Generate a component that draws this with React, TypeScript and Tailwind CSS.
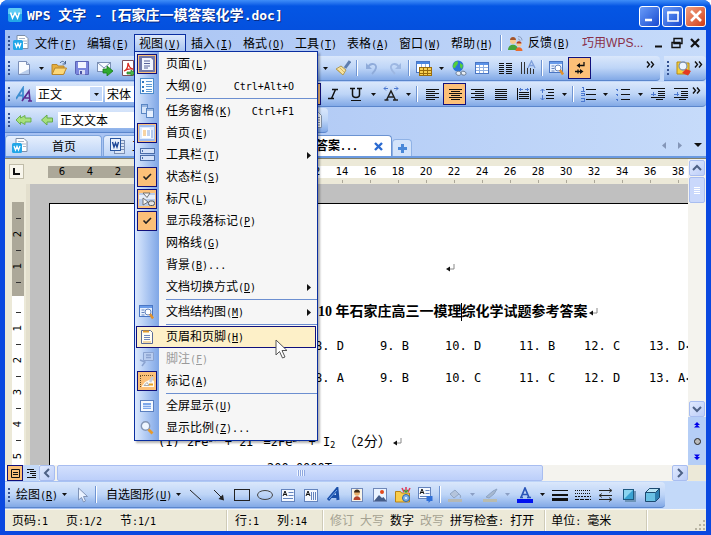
import { Fragment, ReactNode } from "react";
import clsx from "clsx";

const HAN = "font-['Noto_Sans_CJK_SC',sans-serif]";
const BAR = "bg-linear-to-b from-[#dae7fb] via-[#bed5f7] to-[#82a9e6] border-b border-[#5b86cc]";

/* Chinese text with the latin runs set at half width */
const Han = ({ text, latin = "text-[10px]" }: { text: string; latin?: string }) => (
  <span className="whitespace-pre">
    {text.split(/([\x20-\x7e]+)/).map((part, i) =>
      i % 2 ? (
        <span key={i} className={clsx("font-['DejaVu_Sans_Mono',monospace]", latin)}>
          {part}
        </span>
      ) : (
        part
      )
    )}
  </span>
);

const Mnemonic = ({ text, hotkey, tail = "" }: { text: string; hotkey: string; tail?: string }) => (
  <span className="whitespace-pre">
    {text}
    <span className="font-['DejaVu_Sans_Mono',monospace] text-[10px]">
      (<span className="underline underline-offset-1">{hotkey}</span>){tail}
    </span>
  </span>
);

const Svg = ({ children, crisp, className = "h-4 w-4" }: { children: ReactNode; crisp?: boolean; className?: string }) => (
  <svg
    viewBox="0 0 16 16"
    fill="none"
    className={clsx("shrink-0", className)}
    shapeRendering={crisp ? "crispEdges" : "auto"}
    aria-hidden="true"
  >
    {children}
  </svg>
);

const Lines = ({ d, color = "#111" }: { d: string; color?: string }) => <path d={d} stroke={color} />;

const WpsLogo = () => (
  <Svg className="h-4 w-4">
    <rect x="1" y="1" width="14" height="14" rx="2" fill="#22a7e8" />
    <path d="M1 3a2 2 0 0 1 2-2h10a2 2 0 0 1 2 2v4H1z" fill="#5fcbf5" />
    <path d="M3.500 5.500l2 5.500L8 6l2.500 5 2-5.500" stroke="#fff" strokeWidth="1.600" />
  </Svg>
);

const icons: Record<string, ReactNode> = {
  docWps: (
    <Svg>
      <path d="M4 .5h8l3 3v10H4z" fill="#fff" stroke="#7d8ea8" />
      <path d="M6 3.500h6M10 6h4M11 8.500h3" stroke="#a9b5c8" />
      <rect x="0" y="5" width="10" height="10" rx="1.500" fill="#22a7e8" />
      <path d="M2 8l1.500 4L5 8.500 6.500 12 8 8" stroke="#fff" strokeWidth="1.300" />
    </Svg>
  ),
  docW: (
    <Svg>
      <rect x="4.500" y="2.500" width="10" height="13" fill="#dce6f5" stroke="#7b8fb5" />
      <path d="M11 5.500h3M11 8.500h3M11 11.500h3" stroke="#7b8fb5" />
      <rect x=".5" y=".5" width="10" height="12" fill="#e9f0fb" stroke="#2a56a0" />
      <path d="M2.500 4l1.500 5L5.500 5 7 9l1.500-5" stroke="#1c4596" strokeWidth="1.400" />
    </Svg>
  ),
  newDoc: (
    <Svg>
      <path d="M2.500 1.500h8l3 3v10h-11z" fill="#f8fbff" stroke="#7b8fb8" />
      <path d="M10.500 1.500v3h3" stroke="#7b8fb8" fill="#cddbf0" />
      <path d="M3 14h10V9z" fill="#b9cdec" />
    </Svg>
  ),
  open: (
    <Svg>
      <path d="M1 4.500h5l1 1.500h6v8H1z" fill="#e6ae3c" stroke="#b8862c" />
      <path d="M1 14.500l3-6.500h11.500l-3 6.500z" fill="#fdd878" stroke="#b8862c" />
      <path d="M9 3c2-2.500 4-2 5 .5M14.500 1v3h-3" stroke="#48648f" />
    </Svg>
  ),
  save: (
    <Svg>
      <path d="M1.500 1.500h13v13h-12l-1-1z" fill="#7b86dd" stroke="#5a63b5" />
      <rect x="4" y="2" width="8" height="6" fill="#f2f5ff" />
      <rect x="5" y="10" width="6" height="4.500" fill="#d5daf5" />
      <rect x="6" y="11" width="2" height="3" fill="#4a53a5" />
    </Svg>
  ),
  send: (
    <Svg>
      <rect x=".5" y="2.500" width="13" height="9" fill="#f6faff" stroke="#7b90b5" />
      <path d="M1 3l6 5 6-5" stroke="#7b90b5" />
      <path d="M6 9h4V6l6 5-6 5v-3H6z" fill="#2faa2f" stroke="#187818" strokeWidth=".8" />
    </Svg>
  ),
  pdf: (
    <Svg>
      <path d="M2.500.5h11v15h-11z" fill="#fff" stroke="#7c4f5a" />
      <path d="M4 11c3-1 4-5 4-8 1 4 2 5 5 6-3-.5-6 0-9 2z" stroke="#d92a20" strokeWidth="1.300" />
      <path d="M7 12h4v-2l4 3-4 3v-2H7z" fill="#4cb648" stroke="#217a20" strokeWidth=".7" />
    </Svg>
  ),
  brush: (
    <Svg>
      <path d="M15 1l-5 7" stroke="#5d7dae" strokeWidth="3" />
      <path d="M1 9l5-3 5 4-3 5z" fill="#f6e2a0" stroke="#b09a56" />
      <path d="M2.500 9.500l4 4M5 8l4 4" stroke="#c9a548" strokeWidth=".7" />
    </Svg>
  ),
  undo: (
    <Svg>
      <path d="M4 7c3-5 9-3 8 1-.5 2.500-2 4-4 6" stroke="#8fabda" strokeWidth="1.800" />
      <path d="M2 3v6h6z" fill="#8fabda" />
    </Svg>
  ),
  redo: (
    <Svg>
      <path d="M12 7C9 2 3 4 4 8c.5 2.500 2 4 4 6" stroke="#9db7e2" strokeWidth="1.800" />
      <path d="M14 3v6H8z" fill="#9db7e2" />
    </Svg>
  ),
  tableGrid: (
    <Svg crisp>
      <rect x=".5" y="1.500" width="13" height="11" fill="#fff" stroke="#4a76c4" />
      <path d="M1 3h12" stroke="#4a86e0" strokeWidth="2" />
      <path d="M5.500 4v8M9.500 4v8" stroke="#9ab4de" />
      <rect x="3.500" y="7.500" width="12" height="8" fill="#f7cf52" stroke="#9a6c0c" />
      <path d="M4 10.500h11M4 13h11M7.500 8v7M11.500 8v7" stroke="#9a6c0c" />
    </Svg>
  ),
  globe: (
    <Svg>
      <circle cx="7" cy="6" r="5.500" fill="#2c75d8" />
      <path d="M4 2c3-2 4 1 2 3s-1 3-3 3-1-4 1-6zM9 3l3 2-1 4-2-2z" fill="#54cf3c" />
      <path d="M5 13.500c0-3 5-3 5 0s-5 2-5 0zM10 13c0-3 5-2 5 .5s-5 2-5-.5z" stroke="#67788f" fill="#e8eef6" />
    </Svg>
  ),
  table: (
    <Svg crisp>
      <rect x="1.500" y="2.500" width="13" height="11" fill="#fff" stroke="#4a76c4" />
      <path d="M2 4h12" stroke="#5a92e8" strokeWidth="2" />
      <path d="M2 7.500h12M2 10.500h12M5.500 5v8M9.500 5v8" stroke="#8fb0e3" />
    </Svg>
  ),
  columns: (
    <Svg crisp>
      <Lines d="M2 3.500h5M2 5.500h5M2 7.500h5M2 9.500h5M2 11.500h5M2 13.500h5M9 3.500h6M9 5.500h6M9 7.500h6M9 9.500h6M9 11.500h6M9 13.500h6" />
    </Svg>
  ),
  textDir: (
    <Svg>
      <Lines d="M1.500 2v12M4.500 2v12M7.500 8v6M10.500 8v6M13.500 9v5" color="#333" />
      <path d="M8 8l3.500-7L15 8M9.500 5.500h4" stroke="#7f9fda" strokeWidth="1.300" />
    </Svg>
  ),
  preview: (
    <Svg>
      <rect x=".5" y="1.500" width="13" height="11" fill="#e8f1ff" stroke="#4a76c4" />
      <path d="M1 3h12" stroke="#6a9cea" strokeWidth="2" />
      <path d="M2.500 6h3M2.500 8.500h3M2.500 11h3" stroke="#6484bd" />
      <circle cx="9" cy="8" r="3" fill="#fff" stroke="#6484bd" />
      <path d="M11 10l3 4.500" stroke="#e2922e" strokeWidth="2.500" />
    </Svg>
  ),
  marks: (
    <Svg>
      <path d="M12 2v3.500H6M3 11.500h7M6 9.500v4" stroke="#111" strokeWidth="1.300" />
      <path d="M4.500 5.500L8 3v5zM11.500 11.500L8 9v5z" fill="#111" />
    </Svg>
  ),
  findDoc: (
    <Svg>
      <path d="M2 2h4l1 1h7v11H2z" fill="#f6d23c" stroke="#b68a12" />
      <circle cx="8" cy="6" r="4" fill="#eef6ff" stroke="#7d90aa" strokeWidth="1.300" />
      <path d="M7 13l4-4 5 2-3 4.500z" fill="#e23a22" />
    </Svg>
  ),
  fontStyle: (
    <Svg>
      <path d="M0 13L7 2v11M2.500 9.500H7" stroke="#3d8ed0" strokeWidth="1.800" />
      <path d="M6 15l7-10 1 10M9 12h5M12 15h4" stroke="#5a2a90" strokeWidth="1.600" />
    </Svg>
  ),
  italic: (
    <Svg>
      <path d="M7 3.500h6M3 12.500h6M10.500 3.500l-4 9" stroke="#111" strokeWidth="1.500" />
    </Svg>
  ),
  underline: (
    <Svg>
      <path d="M2 2.500h5M9 2.500h5M4.500 2.500v6q0 3 3.500 3t3.500-3v-6" stroke="#111" strokeWidth="1.500" />
      <path d="M3 14.500h10" stroke="#111" strokeWidth="1.200" />
    </Svg>
  ),
  charScale: (
    <Svg>
      <path d="M3.500 14L8 5l4.500 9M5.500 11h5M1.500 14h4M10 14h5" stroke="#222" strokeWidth="1.500" />
      <path d="M1 2.500h4M11 2.500h4M3 .5l-2 2 2 2M13 .5l2 2-2 2" stroke="#4c78cf" />
    </Svg>
  ),
  alignLeft: (
    <Svg crisp>
      <Lines d="M2 3.500h13M2 5.500h9M2 7.500h13M2 9.500h9M2 11.500h13M2 13.500h9" />
    </Svg>
  ),
  alignCenter: (
    <Svg crisp>
      <Lines d="M2 3.500h13M4 5.500h9M2 7.500h13M4 9.500h9M2 11.500h13M4 13.500h9" />
    </Svg>
  ),
  alignRight: (
    <Svg crisp>
      <Lines d="M1 3.500h13M5 5.500h9M1 7.500h13M5 9.500h9M1 11.500h13M5 13.500h9" />
    </Svg>
  ),
  justify: (
    <Svg crisp>
      <Lines d="M2 3.500h12M2 5.500h12M2 7.500h12M2 9.500h12M2 11.500h12M2 13.500h12" />
    </Svg>
  ),
  distribute: (
    <Svg crisp>
      <Lines d="M1.500 2v12M14.500 2v12M3 6.500h10M3 8.500h10M3 10.500h10M3 12.500h10" />
      <Lines d="M3 3.500h4M9 3.500h4M4.500 2v3M11.500 2v3" color="#4c78cf" />
    </Svg>
  ),
  lineSpace: (
    <Svg>
      <Lines d="M7 3.500h8M9 6.500h6M7 9.500h8M7 12.500h8" />
      <path d="M3.500 3v4M1.500 5l2-2 2 2M3.500 9v5M1.500 12l2 2 2-2" stroke="#4c78cf" />
    </Svg>
  ),
  numbered: (
    <Svg crisp>
      <Lines d="M6 3.500h10M6 8.500h10M6 13.500h10" />
      <Lines d="M2 1.500h1.500v4M1 5.500h4M1 7.500h3v2H1M1 12h3v3H1" color="#4c78cf" />
    </Svg>
  ),
  bullets: (
    <Svg crisp>
      <Lines d="M6 3.500h9M6 8.500h9M6 13.500h9" />
      <Lines d="M1 3.500h2M1 8.500h2M1 13.500h2M2 2.500v2M2 7.500v2M2 12.500v2" color="#4c78cf" />
    </Svg>
  ),
  outdent: (
    <Svg crisp>
      <Lines d="M1 2.500h14M8 5.500h7M8 7.500h7M8 9.500h7M1 11.500h14M6 13.500h7" />
      <Lines d="M1 8h5M3.500 6v4" color="#4c78cf" />
    </Svg>
  ),
  indent: (
    <Svg crisp>
      <Lines d="M1 2.500h14M8 5.500h7M8 7.500h7M8 9.500h7M1 11.500h14M6 13.500h7" />
      <Lines d="M1 8h5M4.500 6v4" color="#4c78cf" />
    </Svg>
  ),
  arrowsLeft: (
    <Svg>
      <path d="M0 8l4.500-4.500V6L9 3.500V6h6v4H9v2.500L4.500 10v2.500z" fill="#a6e07c" stroke="#64ab4a" strokeWidth=".9" />
    </Svg>
  ),
  arrowLeft: (
    <Svg>
      <path d="M2.500 8L8 3v3h5.500v4H8v3z" fill="#a6e07c" stroke="#64ab4a" />
    </Svg>
  ),
  page: (
    <Svg>
      <path d="M3.500.5h7l3 3v12h-10z" fill="#fff" stroke="#8090a8" />
      <path d="M5 5.500h7M5 8h7M5 10.500h7M5 13h7" stroke="#8090a8" />
    </Svg>
  ),
  cursor: (
    <Svg>
      <path d="M4.500 1v12l3-2.500 2 4.500 2-1-2-4.500h4z" fill="#eaf2ff" stroke="#8094b8" />
    </Svg>
  ),
  line: (
    <Svg>
      <Lines d="M2 3l11 10" color="#222" />
    </Svg>
  ),
  arrow: (
    <Svg>
      <Lines d="M3 3l8 8" color="#222" />
      <path d="M13 13.500L7.500 12 12 7.500z" fill="#222" />
    </Svg>
  ),
  rect: (
    <Svg crisp>
      <rect x=".5" y="2.500" width="15" height="11" stroke="#222" />
    </Svg>
  ),
  ellipse: (
    <Svg>
      <ellipse cx="8" cy="8" rx="7.500" ry="4.500" stroke="#444" />
    </Svg>
  ),
  textBox: (
    <Svg>
      <rect x="1.500" y="2.500" width="13" height="12" fill="#f4f8ff" stroke="#6484bd" />
      <path d="M3 9l2-5 2 5M4 7.500h2" stroke="#111" />
      <path d="M8.500 5.500h5M8.500 8.500h5M3 11.500h10" stroke="#6484bd" />
    </Svg>
  ),
  textBoxV: (
    <Svg>
      <rect x="1.500" y="2.500" width="13" height="12" fill="#f4f8ff" stroke="#6484bd" />
      <path d="M3 9l2-5 2 5M4 7.500h2" stroke="#111" />
      <path d="M8.500 5v8M10.500 5v8M12.500 5v8" stroke="#6484bd" />
    </Svg>
  ),
  wordArt: (
    <Svg>
      <path d="M2 13L11 2l1 11M5.500 9.500H12" stroke="#1b4fa8" strokeWidth="3" />
      <path d="M3 12L11 3" stroke="#6ea4ec" />
    </Svg>
  ),
  person: (
    <Svg>
      <rect x="2.500" y="1.500" width="11" height="13" fill="#f8f4e8" stroke="#7088b8" />
      <circle cx="8" cy="6" r="2.800" fill="#e9b06c" />
      <path d="M5 5.500c0-4 6-4 6 0z" fill="#3d2a18" />
      <path d="M4.500 13c0-5 7-5 7 0z" fill="#b5432c" />
    </Svg>
  ),
  picture: (
    <Svg>
      <rect x="1.500" y="1.500" width="13" height="13" fill="#eaf3ff" stroke="#7088b8" />
      <circle cx="10" cy="5" r="2" fill="#e24a1c" />
      <path d="M2 14l5-6 3 3 1.500-1 3 4z" fill="#445c88" />
    </Svg>
  ),
  clip: (
    <Svg>
      <path d="M.5 4.500h5l1 1.500h8v9H.5z" fill="#f9cd4c" stroke="#b98314" />
      <path d="M7 1l2 4M11 0v5M15 1l-2 4" stroke="#e23f5c" strokeWidth="1.600" />
      <path d="M9 3l2 2 2-2" stroke="#35a435" strokeWidth="1.500" />
      <circle cx="11" cy="11" r="3.500" fill="#7fb2e8" stroke="#2d67ab" />
      <circle cx="11" cy="11" r="1" fill="#fff" />
    </Svg>
  ),
  textEffect: (
    <Svg>
      <rect x=".5" y=".5" width="12" height="11" fill="#f4f8ff" stroke="#6484bd" />
      <path d="M2 7l2-5 2 5M3 5.500h2" stroke="#111" />
      <path d="M7.500 3.500h4M7.500 6.500h4M2 9.500h9" stroke="#6484bd" />
      <path d="M8.500 9h6v5h-2l-2 2v-2h-2z" fill="#2f6fd8" />
    </Svg>
  ),
  fill: (
    <Svg>
      <path d="M3 7l5-4 4 4-5 4zM12 7c2 1 2 3 1 4" fill="#b4c4dc" stroke="#92a6c4" />
      <path d="M1 13.500h14" stroke="#b5b8b4" strokeWidth="3" />
    </Svg>
  ),
  lineColor: (
    <Svg>
      <path d="M4 10l7-6 4-2-3 5-5 4z" fill="#a6b8d0" stroke="#8ea4c4" />
      <path d="M1 13.500h14" stroke="#b9bbae" strokeWidth="3" />
    </Svg>
  ),
  fontColor: (
    <Svg>
      <path d="M4 10.500L8 1l4 9.500M5.500 7.500h5M3 10.500h3M10 10.500h4" stroke="#2a55b8" strokeWidth="1.700" />
      <path d="M0 14h16" stroke="#0010f0" strokeWidth="4" />
    </Svg>
  ),
  lineWeight: (
    <Svg crisp>
      <path d="M0 3.500h16" stroke="#111" />
      <path d="M0 8h16" stroke="#111" strokeWidth="2" />
      <path d="M0 12.500h16" stroke="#111" strokeWidth="3" />
    </Svg>
  ),
  dashes: (
    <Svg crisp>
      <path d="M0 3.500h16M0 6.500h16" stroke="#111" strokeDasharray="1 1" />
      <path d="M0 9.500h16" stroke="#111" strokeDasharray="2 1" />
      <path d="M0 12.500h16" stroke="#111" strokeDasharray="4 1" />
    </Svg>
  ),
  arrowStyle: (
    <Svg>
      <path d="M1 3.500h13M1 8.500h13M1 12.500h13" stroke="#222" />
      <path d="M11 1.500l3 2-3 2M4 6.500l-3 2 3 2M11 10.500l3 2-3 2" stroke="#444" />
    </Svg>
  ),
  shadow: (
    <Svg>
      <path d="M4 4h11v11H4z" fill="#6d94b8" />
      <rect x="2.500" y="2.500" width="10" height="10" fill="#3aa2d2" stroke="#1c5880" />
      <path d="M3 3h9L3 12z" fill="#8ad4f0" />
    </Svg>
  ),
  cube: (
    <Svg>
      <path d="M1.500 5.500l4-4h10v9l-4 4h-10z" fill="#2d7fb0" stroke="#1c4a70" />
      <path d="M1.500 5.500l4-4h10l-4 4z" fill="#b9e4f5" stroke="#1c4a70" />
      <path d="M2 6h9v8H2z" fill="#69c0e4" />
    </Svg>
  ),
  pageView: (
    <Svg>
      <path d="M0 0h16v16H0z" fill="#7177a8" />
      <path d="M3 2h9l2 2v10H3z" fill="#f4f6ff" />
      <path d="M5 5h6M5 7.500h6M5 10h6M5 12h4" stroke="#59619a" />
    </Svg>
  ),
  outline: (
    <Svg crisp>
      <rect x="1.500" y=".5" width="13" height="15" fill="#f8fcff" stroke="#4b8acb" />
      <path d="M3 3.500h2M3 8.500h2M3 13h2" stroke="#2f76c0" strokeWidth="2" />
      <path d="M7 3.500h6M7 6h6M7 8.500h6M7 11h6M7 13.500h6" stroke="#5b98d4" />
    </Svg>
  ),
  taskPane: (
    <Svg>
      <rect x="2.500" y="1.500" width="6" height="9" fill="#d5e4fa" stroke="#5a86c4" />
      <rect x="7.500" y="5.500" width="7" height="9" fill="#e6f0ff" stroke="#5a86c4" />
      <path d="M3 3h5M8 7h6" stroke="#5a86c4" />
    </Svg>
  ),
  home: (
    <Svg>
      <path d="M0 0h16v16H0z" fill="#9fbdf0" />
      <rect x="1" y="2" width="14" height="12" fill="#deebff" />
      <path d="M3 3h7l2 2v8H3z" fill="#fff" />
      <path d="M4 6h3M4 8h3M4 10h3" stroke="#f0a848" />
      <path d="M8 6h3M8 8h3M8 10h3M13 5v8" stroke="#86a6dc" />
    </Svg>
  ),
  toolbars: (
    <Svg crisp>
      <rect x="1.500" y="1.500" width="14" height="5" fill="#d5e3fa" stroke="#4a6ca8" />
      <rect x="1.500" y="8.500" width="14" height="5" fill="#d5e3fa" stroke="#4a6ca8" />
      <path d="M3.500 3v2M3.500 10v2" stroke="#4a6ca8" />
    </Svg>
  ),
  check: (
    <Svg>
      <path d="M4.500 7.500L7 10l5-5" stroke="#222" strokeWidth="1.600" />
    </Svg>
  ),
  ruler: (
    <Svg>
      <path d="M0 2h16v13H0z" fill="#b9cbe8" />
      <path d="M0 4h16v4H0z" fill="#e6edf8" />
      <path d="M4 2h7L8 6.500zM4 7l5 4-5 3z" fill="#f5f5f5" stroke="#666" strokeWidth=".9" />
      <rect x="9.500" y="10" width="6" height="4.500" rx="2" fill="#e4e4e4" stroke="#555" />
    </Svg>
  ),
  headerFooter: (
    <Svg>
      <path d="M2.500 1.500h9l2 2v11h-11z" fill="#fffdf2" stroke="#596a96" />
      <path d="M4 2.500h6" stroke="#e39a2c" strokeWidth="2" />
      <path d="M5 6.500h6M5 8.500h6M5 10.500h6" stroke="#6f86bb" />
      <path d="M4 13h8" stroke="#e3b45c" />
    </Svg>
  ),
  footnote: (
    <Svg>
      <path d="M4.500 1.500h10v8h-10z" stroke="#8ba3d0" fill="#b9cdf0" />
      <path d="M7 4h5M7 6.500h5M1 9l5 2-3 4" stroke="#8ba3d0" strokeWidth="1.500" />
    </Svg>
  ),
  markup: (
    <Svg>
      <path d="M1 2.500h14M1.500 3v11" stroke="#6b5028" strokeDasharray="1 1" />
      <path d="M3 13l3-4 6-3 3 2v6H3z" fill="#fffaf0" />
      <path d="M11 9l3-5" stroke="#c8ccd8" strokeWidth="2.500" />
      <path d="M5 12.500l3-3 2 3z" fill="#fff" stroke="#aaa" />
      <path d="M10 11.500h4" stroke="#e6a020" strokeWidth="2" />
    </Svg>
  ),
  fullScreen: (
    <Svg crisp>
      <rect x="1.500" y="2.500" width="13" height="11" fill="#f6faff" stroke="#5a7fc0" />
      <path d="M4 5h8v6H4z" fill="#7ea8ea" />
      <path d="M4 7.500h8M4 9.500h8" stroke="#cfe0fb" />
    </Svg>
  ),
  zoom: (
    <Svg>
      <circle cx="6.500" cy="6" r="4.200" fill="#eef6ff" stroke="#8496b4" strokeWidth="1.400" />
      <path d="M9.500 9.500l4 4" stroke="#e79a2c" strokeWidth="2.800" />
    </Svg>
  ),
  feedback: (
    <Svg>
      <circle cx="5" cy="6" r="3" fill="#f7c890" />
      <path d="M2 5c0-4 6-4 6 0z" fill="#a4542a" />
      <path d="M0 15c0-7 10-7 10 0z" fill="#46a43c" />
      <circle cx="11" cy="9" r="2.500" fill="#f7c890" />
      <path d="M8.500 8.500c0-3 5-3 5 0z" fill="#b03a22" />
      <path d="M7.500 16c0-5 7-5 7 0z" fill="#e86a2c" />
      <path d="M10 1.500c3 0 4 2 4 4M10 4c1.500 0 2 1 2 2" stroke="#8d9fc0" />
    </Svg>
  ),
};

const Grip = () => (
  <div className="flex w-[7px] shrink-0 flex-col items-center justify-center gap-0.5">
    {[0, 1, 2, 3].map((i) => (
      <i key={i} className="h-0.5 w-0.5 bg-[#33508f]" />
    ))}
  </div>
);

const Sep = () => (
  <div className="flex w-1.5 shrink-0 justify-center py-1">
    <div className="h-full min-h-4 w-px bg-[#6f95d3]" />
    <div className="h-full min-h-4 w-px bg-white" />
  </div>
);

const Caret = ({ dim }: { dim?: boolean }) => (
  <svg viewBox="0 0 5 3" className="h-[3px] w-[5px]" aria-hidden="true">
    <path d="M0 0h5L2.500 3z" fill={dim ? "#8b9fc4" : "#111"} />
  </svg>
);

const Drop = ({ dim }: { dim?: boolean }) => (
  <button aria-label="▾" className="flex w-3 shrink-0 items-center justify-center">
    <Caret dim={dim} />
  </button>
);

const Tool = ({ name, on }: { name: string; on?: boolean }) => (
  <button
    aria-label={name}
    className={clsx(
      "my-px flex w-[23px] shrink-0 items-center justify-center",
      on && "border border-[#10107c] bg-[#fcc078]"
    )}
  >
    {icons[name]}
  </button>
);

/* "|" is a separator, "v" a drop-down arrow, "-" a dimmed one, "*" marks a pressed button */
const Tools = ({ list }: { list: string }) => (
  <>
    {list.split(" ").map((t, i) => {
      if (t === "|") return <Sep key={i} />;
      if (t === "v" || t === "-") return <Drop key={i} dim={t === "-"} />;
      return <Tool key={i} name={t.replace("*", "")} on={t.startsWith("*")} />;
    })}
  </>
);

const More = () => (
  <button aria-label="»" className="flex h-4 w-[14px] shrink-0 items-center">
    <svg viewBox="0 0 9 7" className="mt-px h-[7px] w-[9px]" fill="none" aria-hidden="true">
      <path d="M1 .5l2.500 3-2.500 3M5 .5l2.500 3-2.500 3" stroke="#111" strokeWidth="1.400" />
    </svg>
  </button>
);

const MENUS = [
  ["文件", "F"],
  ["编辑", "E"],
  ["视图", "V"],
  ["插入", "I"],
  ["格式", "O"],
  ["工具", "T"],
  ["表格", "A"],
  ["窗口", "W"],
  ["帮助", "H"],
];

type Entry = {
  text: string;
  hotkey: string;
  icon?: string;
  on?: boolean;
  keys?: string;
  sub?: boolean;
  tail?: string;
  off?: boolean;
  hover?: boolean;
};

const VIEW_MENU: Entry[][] = [
  [
    { text: "页面", hotkey: "L", icon: "pageView", on: true },
    { text: "大纲", hotkey: "O", icon: "outline", keys: "Ctrl+Alt+O" },
  ],
  [
    { text: "任务窗格", hotkey: "K", icon: "taskPane", keys: "Ctrl+F1" },
    { text: "首页", hotkey: "E", icon: "home", on: true },
    { text: "工具栏", hotkey: "T", icon: "toolbars", sub: true },
    { text: "状态栏", hotkey: "S", icon: "check", on: true },
    { text: "标尺", hotkey: "L", icon: "ruler", on: true },
    { text: "显示段落标记", hotkey: "P", icon: "check", on: true },
    { text: "网格线", hotkey: "G" },
    { text: "背景", hotkey: "B", tail: "..." },
    { text: "文档切换方式", hotkey: "D", sub: true },
  ],
  [{ text: "文档结构图", hotkey: "M", icon: "preview", sub: true }],
  [
    { text: "页眉和页脚", hotkey: "H", icon: "headerFooter", hover: true },
    { text: "脚注", hotkey: "F", icon: "footnote", off: true },
    { text: "标记", hotkey: "A", icon: "markup", on: true },
  ],
  [
    { text: "全屏显示", hotkey: "U", icon: "fullScreen" },
    { text: "显示比例", hotkey: "Z", icon: "zoom", tail: "..." },
  ],
];

const MenuEntry = ({ item }: { item: Entry }) => (
  <button
    disabled={item.off}
    className={clsx(
      "relative mx-px flex h-[22px] items-center border text-left",
      item.hover ? "border-[#10107c] bg-[#fdf0c8]" : "border-transparent",
      item.off && "text-[#9a9a9a]"
    )}
  >
    <span
      className={clsx(
        "flex h-5 w-5 items-center justify-center border",
        item.on ? "border-[#10107c] bg-[#fcc078]" : "border-transparent"
      )}
    >
      {item.icon && icons[item.icon]}
    </span>
    <span className="ml-[9px] flex-1">
      <Mnemonic text={item.text} hotkey={item.hotkey} tail={item.tail} />
    </span>
    {item.keys && (
      <span className="mr-[21px]">
        <Han text={item.keys} />
      </span>
    )}
    {item.sub && (
      <svg viewBox="0 0 4 7" className="mr-1 h-[7px] w-1" aria-hidden="true">
        <path d="M0 0l4 3.500L0 7z" fill="#111" />
      </svg>
    )}
    {item.hover && (
      <svg viewBox="0 0 13 20" className="absolute top-3 left-[138px] z-10 h-5 w-[13px]" aria-hidden="true">
        <path d="M1 1v15l3.500-3.500 3 6.500 2.500-1-3-6.500h5z" fill="#fff" stroke="#555" />
      </svg>
    )}
  </button>
);

const ViewMenu = () => (
  <div className="absolute top-4 -left-px z-10 flex w-[184px] flex-col border border-[#0a2ea0] bg-[#f6f6f6] bg-linear-to-r from-[#dce9fd] to-[#7fa6e6] bg-[length:24px_100%] bg-no-repeat py-px shadow-[2px_2px_2px_rgba(0,0,0,0.3)]">
    {VIEW_MENU.map((group, i) => (
      <Fragment key={i}>
        {i > 0 && <div className="my-px ml-[31px] h-px bg-[#6c8fd0]" />}
        {group.map((item) => (
          <MenuEntry key={item.text} item={item} />
        ))}
      </Fragment>
    ))}
  </div>
);

const TitleBar = () => (
  <header className="flex h-[30px] shrink-0 items-center bg-linear-to-b from-[#3f8ef8] via-[#0456e4] via-20% to-[#0450de] pr-[5px] pl-[7px]">
    <WpsLogo />
    <h1 className="ml-1 flex-1 truncate text-sm leading-5 font-bold text-white [text-shadow:1px_1px_0_#0a2a80]">
      <Han text="WPS 文字 - [石家庄一模答案化学.doc]" latin="text-[13px]" />
    </h1>
    <div className="flex gap-0.5 pt-0.5">
      {["M5 14h7", "M5 6h10v9H5zM4 7h12", "M5 5l10 10M15 5L5 15"].map((d, i) => (
        <button
          key={d}
          aria-label={["–", "□", "×"][i]}
          className={clsx(
            "flex h-[21px] w-[21px] items-center justify-center rounded-[3px] border border-white",
            i === 2 ? "bg-linear-to-br from-[#f0a080] to-[#d0380c]" : "bg-linear-to-br from-[#6b9cf8] to-[#1a48d0]"
          )}
        >
          <svg viewBox="0 0 20 20" className="h-5 w-5 shrink-0" fill="none" aria-hidden="true">
            <path d={d} stroke="#fff" strokeWidth={i === 1 ? 1.6 : 2.6} />
          </svg>
        </button>
      ))}
    </div>
  </header>
);

const MenuBar = () => (
  <nav className="flex h-[26px] shrink-0 items-center">
    <Grip />
    <span className="ml-px flex w-[17px]">{icons.docWps}</span>
    {MENUS.map(([text, hotkey]) => {
      const open = hotkey === "V";
      return (
        <div
          key={hotkey}
          className={clsx(
            "relative h-[18px] w-[52px] shrink-0 border",
            open ? "border-[#0a2ea0] bg-linear-to-b from-[#dce8fb] to-[#a9c4f0]" : "border-transparent"
          )}
        >
          <button className="h-full w-full">
            <Mnemonic text={text} hotkey={hotkey} />
          </button>
          {open && <ViewMenu />}
        </div>
      );
    })}
    <Sep />
    <button className="ml-1 flex items-center gap-1">
      {icons.feedback}
      <Mnemonic text="反馈" hotkey="B" />
    </button>
    <a href="#tips" className="ml-3 flex-1 truncate font-['Liberation_Sans','Noto_Sans_CJK_SC',sans-serif] text-[#8a3048]">
      巧用WPS...
    </a>
    <div className="flex gap-0.5 pr-[3px]">
      {["M4 11.500h7", "M5 3.500h8v5h-8zM3 7.500h8v5h-8z", "M4 4l8 8M12 4l-8 8"].map((d, i) => (
        <button key={d} aria-label={["–", "□", "×"][i]}>
          <Svg>
            <path d={d} stroke="#111" strokeWidth={i === 1 ? 1.4 : 2.2} />
          </Svg>
        </button>
      ))}
    </div>
  </nav>
);

const Combo = ({ value, label, className, arrow }: { value: string; label: string; className: string; arrow?: boolean }) => (
  <div className={clsx("relative my-1 flex shrink-0 bg-white", className)}>
    <select aria-label={label} className="w-full appearance-none bg-transparent p-0 pl-0.5 text-xs leading-4">
      <option>{value}</option>
    </select>
    {arrow && (
      <span className="pointer-events-none absolute inset-y-px right-px flex w-3 items-center justify-center bg-[#c6dafa]">
        <Caret />
      </span>
    )}
  </div>
);

const Toolbars = () => (
  <div className="flex flex-col gap-px">
    <div className="flex gap-1">
      <div className={clsx("flex h-[25px] min-w-0 flex-1 overflow-hidden rounded-r-sm", BAR)}>
        <Grip />
        <Tools list="newDoc v open save send pdf" />
        <div className="w-[180px] shrink-0" />
        <Tools list="v brush | undo redo | tableGrid v globe table columns textDir | preview *marks" />
        <div className="flex-1" />
        <More />
      </div>
      <div className={clsx("flex h-[25px] w-[42px] rounded-r-sm", BAR)}>
        <Grip />
        <Tool name="findDoc" />
        <More />
      </div>
    </div>
    <div className={clsx("flex h-[25px] overflow-hidden rounded-r-sm", BAR)}>
      <Grip />
      <Tool name="fontStyle" />
      <Combo value="正文" label="样式" className="mr-0.5 ml-px w-[67px]" arrow />
      <Combo value="宋体" label="字体" className="w-[170px]" />
      <div className="w-[23px] shrink-0" />
      <div className="my-px w-[23px] shrink-0 border border-[#10107c] bg-[#fcc078]" />
      <Tools list="italic underline v charScale v | alignLeft *alignCenter alignRight justify distribute lineSpace v | numbered v bullets v outdent indent" />
      <More />
    </div>
    <div className={clsx("flex h-[25px] w-[323px] rounded-r-sm", BAR)}>
      <Grip />
      <Tools list="arrowsLeft arrowLeft" />
      <Combo value="正文文本" label="目标" className="w-[246px]" />
      <Tool name="page" />
    </div>
  </div>
);

const Tabs = () => (
  <div className="mt-px flex h-6 shrink-0 items-end border-b-2 border-[#6b9ae0]">
    <button className="flex h-[21px] w-[97px] items-center rounded-t-sm border border-b-0 border-[#7fa5dd] bg-linear-to-b from-[#e6effd] to-[#bdd4f6] pl-1.5">
      {icons.docWps}
      <span className="ml-6">首页</span>
    </button>
    <button className="ml-px flex h-[21px] w-24 items-center rounded-t-sm border border-b-0 border-[#7fa5dd] bg-linear-to-b from-[#e6effd] to-[#bdd4f6] pl-1.5">
      {icons.docW}
      <span className="ml-1.5">工</span>
    </button>
    <div className="ml-px flex h-[21px] w-48 shrink-0 items-center justify-end rounded-t-sm border border-b-0 border-[#6b93d2] bg-white pr-2">
      <button className="font-bold">
        <Han text="答案..." />
      </button>
      <button aria-label="×" className="ml-4">
        <svg viewBox="0 0 9 9" className="h-[9px] w-[9px]" aria-hidden="true">
          <path d="M1 1l7 7M8 1L1 8" stroke="#2a6ad0" strokeWidth="2.400" />
        </svg>
      </button>
    </div>
    <button
      aria-label="+"
      className="flex h-[17px] w-5 items-center justify-center rounded-t-sm border border-b-0 border-[#8fb2e6] bg-[#d3e3fa]"
    >
      <svg viewBox="0 0 9 9" className="h-[9px] w-[9px]" aria-hidden="true">
        <path d="M4.500 0v9M0 4.500h9" stroke="#4a88d8" strokeWidth="3" />
      </svg>
    </button>
    <div className="flex flex-1 items-center justify-end gap-3 self-center pr-1">
      <svg viewBox="0 0 4 7" className="h-[7px] w-1" aria-hidden="true">
        <path d="M4 0v7L0 3.500z" fill="#8496b8" />
      </svg>
      <svg viewBox="0 0 4 7" className="h-[7px] w-1" aria-hidden="true">
        <path d="M0 0v7l4-3.500z" fill="#8496b8" />
      </svg>
      <svg viewBox="0 0 8 4" className="h-1 w-2" aria-hidden="true">
        <path d="M0 0h8L4 4z" fill="#111" />
      </svg>
    </div>
  </div>
);

const SCALE = [2, 4, 6, 8, 10, 12, 14, 16, 18, 20, 22, 24, 26, 28, 30, 32, 34, 36, 38];

const HRuler = () => (
  <div className="flex h-[25px] shrink-0 items-start overflow-hidden bg-[#ece9d8] pt-[7px] pl-1 font-['DejaVu_Sans',sans-serif] text-[10px] leading-3">
    <div className="-mt-0.5 mr-6 flex h-[15px] w-[15px] shrink-0 items-center justify-center border border-[#c0bca8] bg-[#f8f6ec]">
      <svg viewBox="0 0 7 7" className="h-[7px] w-[7px]" aria-hidden="true">
        <path d="M1 0v6h6" stroke="#111" strokeWidth="2" fill="none" />
      </svg>
    </div>
    <div className="flex h-3 w-[98px] shrink-0 bg-[#aca899]">
      {[6, 4, 2].map((n) => (
        <span key={n} className="w-7 text-center">
          {n}
        </span>
      ))}
    </div>
    <div className="flex h-3 min-w-0 flex-1 bg-white pl-3.5">
      {SCALE.map((n) => (
        <span key={n} className="flex w-7 shrink-0 flex-col items-center">
          {n}
          <i className="mt-0.5 h-[3px] w-px shrink-0 bg-[#aca899]" />
        </span>
      ))}
    </div>
  </div>
);

const VMark = ({ n }: { n?: number }) => (
  <span className="flex h-4 items-center justify-center">
    {n ? <span className="-rotate-90">{n}</span> : <i className="h-px w-[5px] bg-[#333]" />}
  </span>
);

const VRuler = () => (
  <div className="flex w-[25px] shrink-0 flex-col overflow-hidden border-r-4 border-[#e3dfcd] bg-[#ece9d8] pt-[18px] pl-[7px] font-['DejaVu_Sans',sans-serif] text-[10px] leading-3">
    <div className="h-[94px] w-3 shrink-0 bg-[#aca899] pt-2">
      <VMark />
      <VMark n={2} />
      <VMark />
      <VMark n={1} />
      <VMark />
    </div>
    <div className="w-3 flex-1 bg-white pt-2">
      {[1, 2, 3, 4, 5].map((n) => (
        <Fragment key={n}>
          <VMark />
          <VMark n={n} />
        </Fragment>
      ))}
    </div>
  </div>
);

const Return = () => (
  <svg viewBox="0 0 9 8" className="ml-px inline-block h-2 w-[9px]" fill="none" aria-hidden="true">
    <path d="M8 0v5H3" stroke="#888" />
    <path d="M0 5l4-2.500v5z" fill="#111" />
  </svg>
);

const ANSWERS = [
  ["8. D", "9. B", "10. D", "11. B", "12. C", "13. D"],
  ["8. A", "9. B", "10. C", "11. C", "12. D", "13. A"],
];

const Paper = () => (
  <main className="min-w-0 flex-1 overflow-hidden bg-[#c0c0c0] pt-[19px] pl-[19px] text-sm leading-5">
    <div className="h-full overflow-hidden border-t border-l border-black bg-white pt-[52px] whitespace-nowrap">
      <p className="pl-[395px]">
        <Return />
      </p>
      <h2 className="mt-6 pl-[254px] font-bold">
        <span className="font-['Liberation_Serif',serif]">2010 </span>
        年石家庄高三一模理<i className="-mx-px inline-block h-[18px] w-0.5 border-l border-black align-middle" />
        综化学试题参考答案
        <Return />
      </h2>
      {ANSWERS.map((row, i) => (
        <p key={i} className="mt-3 flex pl-[265px]">
          {row.map((cell, j) => (
            <span key={cell} className={clsx("shrink-0", j === 2 ? "w-[74px]" : "w-[65px]")}>
              <Han text={cell} latin="text-xs" />
              {j === 5 && <Return />}
            </span>
          ))}
        </p>
      ))}
      <p className="mt-11 pl-[108px]">
        <Han text="(1) 2Fe" latin="text-xs" />
        <sup className="text-[8px]">3+</sup>
        <Han text=" + 2I" latin="text-xs" />
        <sup className="text-[8px]">-</sup>
        <Han text=" =2Fe" latin="text-xs" />
        <sup className="text-[8px]">2+</sup>
        <Han text=" + I" latin="text-xs" />
        <sub className="text-[9px]">2</sub>
        <Han text=" （2分）" latin="text-xs" />
        <Return />
      </p>
      <p className="mt-1.5 pl-[217px]">
        <Han text="200 0000T" latin="text-xs" />
      </p>
    </div>
  </main>
);

const Scroll = ({ d, label }: { d: string; label: string }) => (
  <button
    aria-label={label}
    className="flex h-4 w-4 shrink-0 items-center justify-center rounded-xs border border-[#a8bdf0] bg-linear-to-br from-[#e1eafe] to-[#bccdf8]"
  >
    <svg viewBox="0 0 10 10" className="h-2.5 w-2.5" fill="none" aria-hidden="true">
      <path d={d} stroke="#4d6185" strokeWidth="2" />
    </svg>
  </button>
);

const Jump = ({ flip }: { flip?: boolean }) => (
  <button aria-label={flip ? "▾" : "▴"} className={clsx("flex h-4 w-4 items-center justify-center", flip && "rotate-180")}>
    <svg viewBox="0 0 6 6" className="h-1.5 w-1.5" aria-hidden="true">
      <path d="M3 0l3 3H0zM3 2.500l3 3H0z" fill="#0000e8" />
    </svg>
  </button>
);

const VScroll = () => (
  <div className="flex w-[18px] shrink-0 flex-col items-center bg-[#f4f3ee] pt-px">
    <Scroll d="M1 7l4-4 4 4" label="▴" />
    <div className="mt-px flex h-[26px] w-4 flex-col items-center justify-center gap-px rounded-xs border border-[#a8bdf0] bg-[#cad8fb]">
      {[0, 1, 2, 3].map((i) => (
        <i key={i} className="h-px w-1.5 bg-white" />
      ))}
    </div>
    <div className="flex-1" />
    <Scroll d="M1 3l4 4 4-4" label="▾" />
    <div className="flex w-full flex-col items-center bg-[#b5cef6]">
      <Jump />
      <span className="flex h-4 items-center">
        <i className="h-[7px] w-[7px] rounded-full border border-[#222] bg-[#bbb]" />
      </span>
      <Jump flip />
    </div>
  </div>
);

const HScroll = () => (
  <div className="flex h-4 shrink-0 bg-[#f4f3ee]">
    <button aria-label="页面" className="ml-0.5 flex w-4 shrink-0 items-center justify-center border border-[#10107c] bg-[#fcc078]">
      <svg viewBox="0 0 9 9" className="h-[9px] w-[9px]" fill="none" aria-hidden="true">
        <path d="M.5.5h8v8h-8zM2 3.500h5M2 5.500h5" stroke="#111" />
      </svg>
    </button>
    <button aria-label="大纲" className="flex w-4 shrink-0 items-center justify-center bg-[#c4d9f8]">
      <svg viewBox="0 0 9 9" className="h-[9px] w-[9px]" fill="none" aria-hidden="true">
        <path d="M0 .5h7M3 2.500h6M3 4.500h6M5 6.500h4M0 8.500h9M0 3.500h2" stroke="#111" />
      </svg>
    </button>
    <Scroll d="M7 1L3 5l4 4" label="◂" />
    <div className="ml-0.5 flex flex-[486] items-center justify-center gap-px rounded-xs border border-[#a8bdf0] bg-linear-to-b from-[#d3e0fd] to-[#bccffa]">
      {[0, 1, 2, 3].map((i) => (
        <i key={i} className="h-1.5 w-px bg-[#eef4ff] shadow-[1px_0_0_#8fa8e0]" />
      ))}
    </div>
    <div className="flex-[129]" />
    <Scroll d="M3 1l4 4-4 4" label="▸" />
    <div className="w-[18px] shrink-0 bg-[#ece9d8]" />
  </div>
);

const DrawBar = () => (
  <div className="my-px flex shrink-0 bg-[#c3d9f9]">
    <div className={clsx("flex h-[26px] items-stretch overflow-hidden rounded-r-sm pr-0.5", BAR)}>
      <Grip />
      <button className="pl-1">
        <Mnemonic text="绘图" hotkey="R" />
      </button>
      <Drop />
      <Tools list="cursor |" />
      <button className="pl-[7px]">
        <Mnemonic text="自选图形" hotkey="U" />
      </button>
      <Drop />
      <Tools list="line arrow rect ellipse textBox textBoxV wordArt person picture clip textEffect | fill - lineColor - fontColor v lineWeight dashes arrowStyle shadow cube" />
    </div>
  </div>
);

const Bar = () => <i className="h-full w-0.5 shrink-0 border-l border-[#cfcbb8] bg-white" />;

const StatusBar = () => (
  <footer className="flex h-[22px] shrink-0 items-center border-t border-[#f8f7f0] bg-[#ece9d8] pl-[7px] leading-4">
    <span className="w-[54px] shrink-0"><Han text="页码:1" /></span>
    <span className="w-[54px] shrink-0"><Han text="页:1/2" /></span>
    <span className="w-[106px] shrink-0"><Han text="节:1/1" /></span>
    <Bar />
    <span className="w-[49px] shrink-0 pl-[7px]"><Han text="行:1" /></span>
    <span className="w-[45px] shrink-0"><Han text="列:14" /></span>
    <Bar />
    <div className="flex gap-1.5 pr-2.5 pl-1.5">
      <span className="text-[#a5a292]">修订</span>
      <span className="text-[#a5a292]">大写</span>
      <span>数字</span>
      <span className="text-[#a5a292]">改写</span>
      <Han text="拼写检查: 打开" />
    </div>
    <Bar />
    <span className="w-[100px] shrink-0 pl-[5px]"><Han text="单位: 毫米" /></span>
    <Bar />
    <svg viewBox="0 0 11 11" className="ml-auto h-[11px] w-[11px] self-end" aria-hidden="true">
      <path d="M8 0h2v2H8zM4 4h2v2H4zM8 4h2v2H8zM0 8h2v2H0zM4 8h2v2H4zM8 8h2v2H8z" fill="#b8b4a2" />
    </svg>
  </footer>
);

const App = () => (
  <div className={clsx("flex h-screen flex-col overflow-hidden rounded-t-lg bg-[#0a48e0] pb-1 text-xs leading-4 text-black", HAN)}>
    <TitleBar />
    <div className="mr-[5px] ml-[5px] flex min-h-0 flex-1 flex-col bg-linear-to-r from-[#a5c0f2] to-[#c6dbfa]">
      <MenuBar />
      <Toolbars />
      <Tabs />
      <div className="flex min-h-0 flex-1 border-t border-[#80806c]">
        <div className="flex min-w-0 flex-1 flex-col">
          <HRuler />
          <div className="flex min-h-0 flex-1">
            <VRuler />
            <Paper />
          </div>
        </div>
        <VScroll />
      </div>
      <HScroll />
      <DrawBar />
      <StatusBar />
    </div>
  </div>
);

export default App;
